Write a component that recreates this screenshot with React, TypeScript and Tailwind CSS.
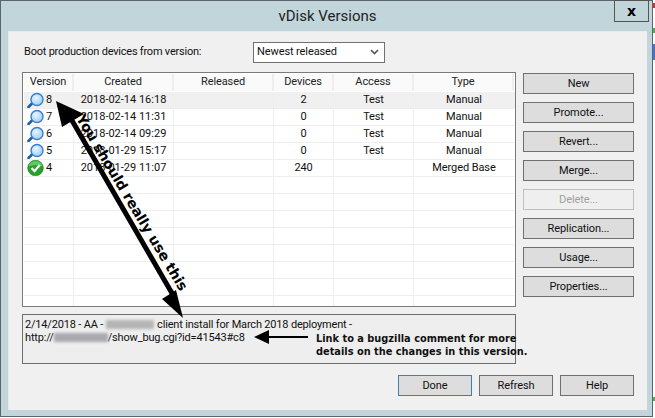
import React from 'react';

const rows = [
  { icon: 'search', version: '8', created: '2018-02-14 16:18', devices: '2', access: 'Test', type: 'Manual', selected: true },
  { icon: 'search', version: '7', created: '2018-02-14 11:31', devices: '0', access: 'Test', type: 'Manual' },
  { icon: 'search', version: '6', created: '2018-02-14 09:29', devices: '0', access: 'Test', type: 'Manual' },
  { icon: 'search', version: '5', created: '2018-01-29 15:17', devices: '0', access: 'Test', type: 'Manual' },
  { icon: 'check', version: '4', created: '2018-01-29 11:07', devices: '240', access: '', type: 'Merged Base' },
];

const sideButtons = ['New', 'Promote...', 'Revert...', 'Merge...', 'Delete...', 'Replication...', 'Usage...', 'Properties...'];
const columns = ['Version', 'Created', 'Released', 'Devices', 'Access', 'Type'];
const gridCols = 'grid grid-cols-[50px_100px_100px_60px_80px_100px]';

function SearchIcon() {
  return (
    <svg width="17" height="16" viewBox="0 0 17 16" className="shrink-0">
      <defs>
        <radialGradient id="lens" cx="0.4" cy="0.35" r="0.7">
          <stop offset="0%" stopColor="#e8f5ff" />
          <stop offset="100%" stopColor="#9accf5" />
        </radialGradient>
      </defs>
      <path d="M1.5 15 L6 10.5" stroke="#1f5fa8" strokeWidth="2.6" strokeLinecap="round" />
      <circle cx="10" cy="7.5" r="6" fill="url(#lens)" stroke="#3a80c9" strokeWidth="1.4" />
    </svg>
  );
}

function CheckIcon() {
  return (
    <svg width="17" height="16" viewBox="0 0 17 16" className="shrink-0">
      <circle cx="8.5" cy="8" r="7.8" fill="#27a02c" stroke="#157a1c" strokeWidth="0.6" />
      <path d="M1.5 6.5 A7.2 7.2 0 0 1 15.5 6.5 Q8.5 3.5 1.5 6.5Z" fill="#7ed67f" opacity="0.7" />
      <path d="M4.5 8 L7.5 11.2 L12.8 5" fill="none" stroke="#ffffff" strokeWidth="2.2" />
    </svg>
  );
}

function Btn({ label, disabled, primary, w }: { label: string; disabled?: boolean; primary?: boolean; w: string }) {
  return (
    <div
      className={`${w} h-[21px] flex items-center justify-center border ${
        disabled
          ? 'border-[#bfbfbf] bg-[#efefef] text-[#9f9f9f]'
          : primary
            ? 'border-[#3c7fb1] bg-[#dddddd] text-[#111]'
            : 'border-[#707070] bg-[#dddddd] text-[#111]'
      }`}
    >
      {label}
    </div>
  );
}

export default function App() {
  return (
    <div className="relative w-[655px] h-[418px] overflow-hidden bg-white text-[11px] leading-[16px] tracking-[-0.1px] text-[#111] font-['Roboto','Open_Sans',sans-serif]">
      <div className="w-[653px] h-[417px] border border-[#59666d] bg-[#c1d5db] flex flex-col">
        {/* title bar */}
        <div className="h-[30px] shrink-0 flex items-start relative">
          <div className="flex-1 text-center pt-[5px] pl-[2px] text-[15px] leading-[20px] tracking-normal text-[#222]">vDisk Versions</div>
          <div className="absolute right-[3px] top-[-1px] w-[35px] h-[22px] border border-[#555] flex items-center justify-center font-bold text-[14px] text-black font-['DejaVu_Sans',sans-serif]">
            x
          </div>
        </div>

        {/* client area */}
        <div className="ml-[7px] w-[639px] h-[379px] bg-[#f0f0f0] border-t border-l border-[#e4ecee] pl-[13px] pt-[9px]">
          <div className="flex items-center h-[22px]">
            <div className="w-[231px] pl-[2px] tracking-[-0.22px]">Boot production devices from version:</div>
            <div className="w-[132px] h-[21px] border border-[#707070] bg-white flex items-center justify-between pl-[3px] pr-[5px]">
              <span>Newest released</span>
              <svg width="9" height="6" viewBox="0 0 9 6">
                <path d="M1 1 L4.5 4.5 L8 1" fill="none" stroke="#555" strokeWidth="1.6" />
              </svg>
            </div>
          </div>

          <div className="flex mt-[9px] gap-[7px]">
            <div className="flex flex-col">
              {/* version grid */}
              <div className="w-[494px] h-[235px] border border-[#7a7a7a] bg-white pl-[1px] pt-[1px] overflow-hidden">
                <div className={`${gridCols} h-[17px] mb-[1px]`}>
                  {columns.map((c) => (
                    <div key={c} className="text-center bg-[#fafafa] border-r-2 border-[#eeeeee] text-[#222]">{c}</div>
                  ))}
                </div>
                {rows.map((r) => (
                  <div key={r.version} className={`${gridCols} h-[17px] border-b border-[#eeeeee] ${r.selected ? 'bg-[#f0f0f0]' : ''}`}>
                    <div className="flex items-center pl-[3px] gap-[2px] border-r border-[#eeeeee]">
                      {r.icon === 'search' ? <SearchIcon /> : <CheckIcon />}
                      <span>{r.version}</span>
                    </div>
                    <div className="text-center tracking-normal border-r border-[#eeeeee]">{r.created}</div>
                    <div className="border-r border-[#eeeeee]" />
                    <div className="text-center border-r border-[#eeeeee]">{r.devices}</div>
                    <div className="text-center border-r border-[#eeeeee]">{r.access}</div>
                    <div className="text-center">{r.type}</div>
                  </div>
                ))}
                {Array.from({ length: 8 }).map((_, i) => (
                  <div key={i} className={`${gridCols} h-[17px] border-b border-[#eeeeee]`}>
                    <div className="border-r border-[#eeeeee]" />
                    <div className="border-r border-[#eeeeee]" />
                    <div className="border-r border-[#eeeeee]" />
                    <div className="border-r border-[#eeeeee]" />
                    <div className="border-r border-[#eeeeee]" />
                    <div />
                  </div>
                ))}
              </div>

              {/* description */}
              <div className="mt-[7px] w-[494px] h-[50px] border border-[#6e6e6e] bg-[#eeeeee] pl-[2px] pt-[3px] leading-[13px] tracking-[-0.18px]">
                <div className="flex items-center whitespace-nowrap">
                  <span>2/14/2018 - AA -</span>
                  <span className="w-[48px] h-[9px] mx-[3px] bg-[#b5b5b5] blur-[1.5px]" />
                  <span>client install for March 2018 deployment -</span>
                </div>
                <div className="flex items-center whitespace-nowrap">
                  <span>http://</span>
                  <span className="w-[54px] h-[9px] bg-[#a8a8ae] blur-[1.5px]" />
                  <span>/show_bug.cgi?id=41543#c8</span>
                </div>
              </div>
            </div>

            <div className="flex flex-col gap-[8px] pt-[1px]">
              {sideButtons.map((b) => (
                <Btn key={b} label={b} w="w-[111px]" disabled={b === 'Delete...'} />
              ))}
            </div>
          </div>

          <div className="flex justify-end gap-[7px] mt-[11px] pr-[13px]">
            <Btn label="Done" w="w-[74px]" primary />
            <Btn label="Refresh" w="w-[74px]" />
            <Btn label="Help" w="w-[74px]" />
          </div>
        </div>
      </div>

      {/* sliver of the desktop behind the dialog */}
      <div className="absolute right-0 top-[3px] w-[2px] h-[5px] bg-[#c8362c]" />
      <div className="absolute right-0 top-[28px] w-[2px] h-[5px] bg-[#4caf50]" />
      <div className="absolute right-0 top-[44px] w-[2px] h-[16px] bg-[#4a74c9]" />
      <div className="absolute right-0 top-[397px] w-[2px] h-[4px] bg-[#4caf50]" />

      {/* hand-drawn annotations on top of the dialog */}
      <svg className="absolute left-0 top-0 pointer-events-none" width="655" height="418" viewBox="0 0 655 418">
        <line x1="70" y1="117" x2="173" y2="295" stroke="#000" strokeWidth="5" />
        <polygon points="56,101 84,114 62,127" fill="#000" />
        <polygon points="183,318 162,299 176,290" fill="#000" />
        <line x1="266" y1="337" x2="308" y2="337" stroke="#000" strokeWidth="2" />
        <polygon points="254,337 269,330 269,344" fill="#000" />
      </svg>
      <div className="absolute left-[86px] top-[112px] origin-top-left rotate-[59deg] whitespace-nowrap font-bold text-[14px] leading-[15px] tracking-normal text-black font-['DejaVu_Sans',sans-serif]">
        You should really use this
      </div>
      <div className="absolute left-[316px] top-[332px] whitespace-nowrap font-bold text-[9.8px] leading-[13px] tracking-normal text-[#111] font-['DejaVu_Sans',sans-serif]">
        Link to a bugzilla comment for more
        <br />
        details on the changes in this version.
      </div>
    </div>
  );
}
